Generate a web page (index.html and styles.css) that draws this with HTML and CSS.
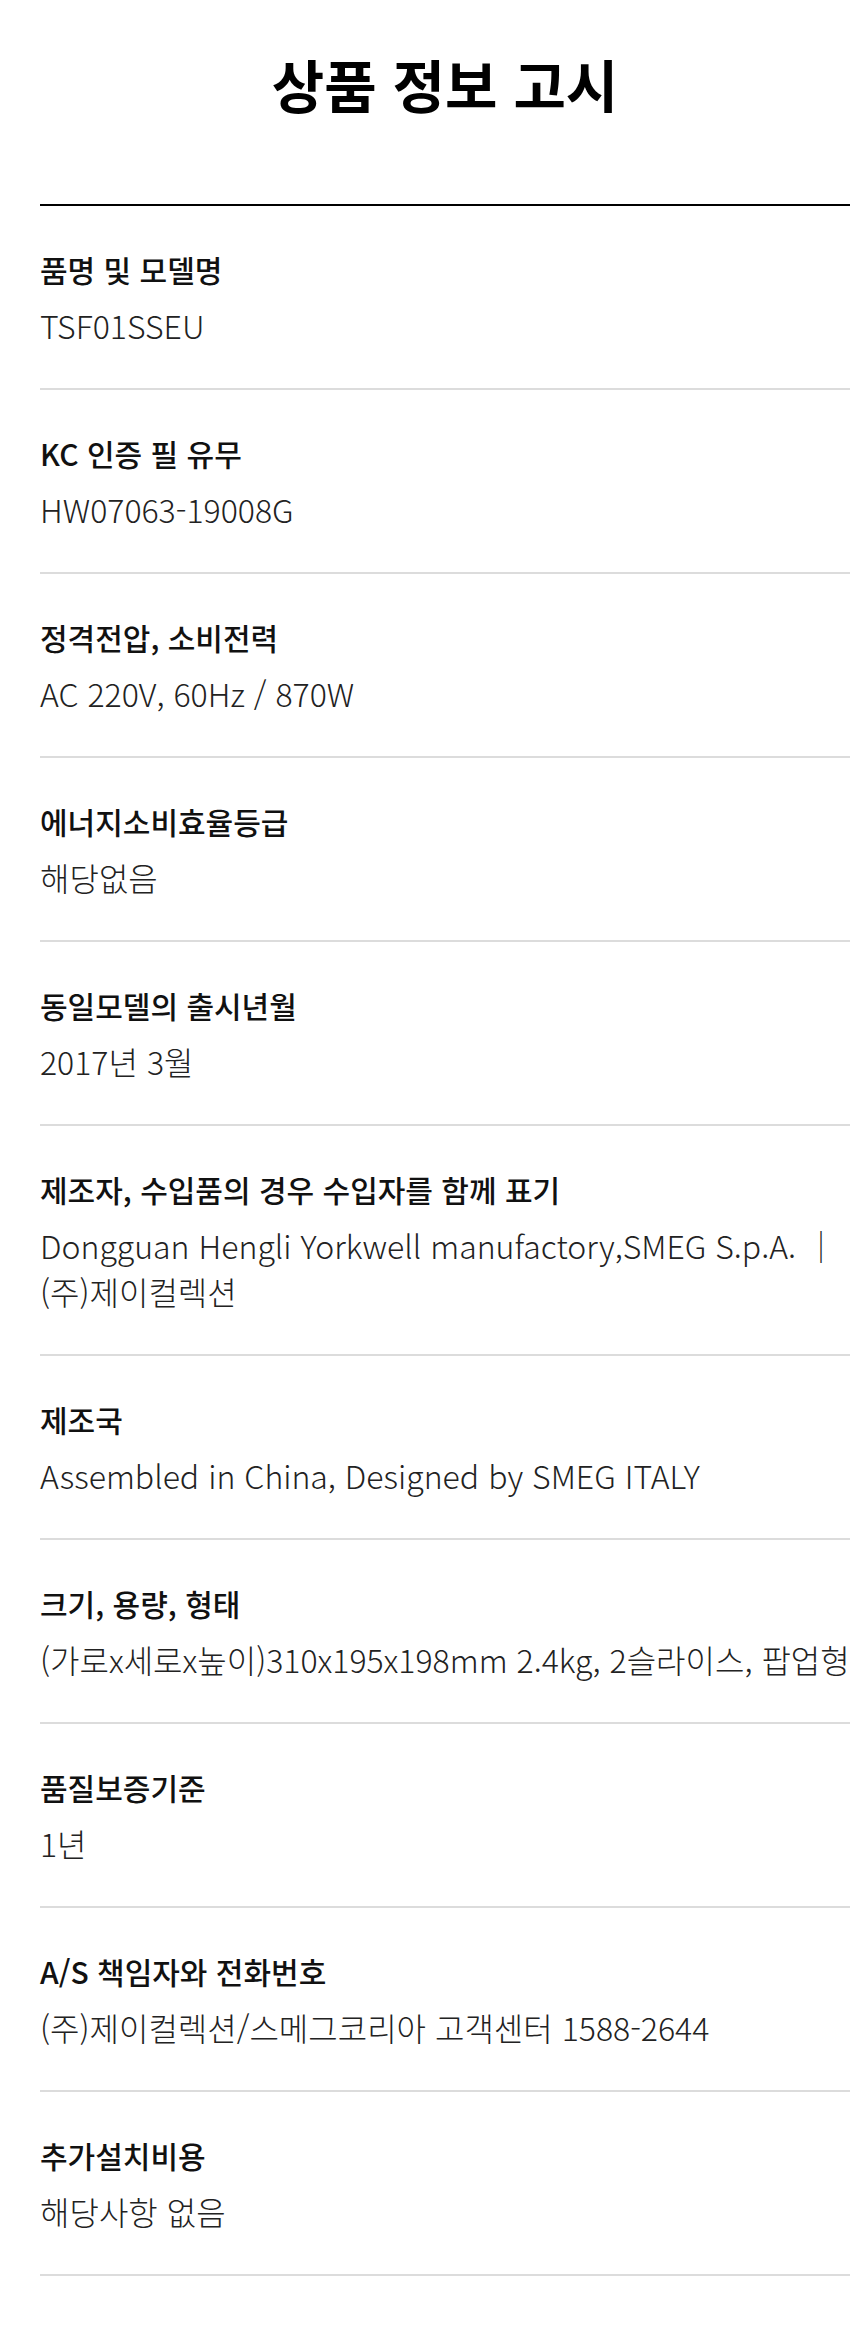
FILE: index.html
```html
<!DOCTYPE html>
<html lang="ko">
<head>
    <meta charset="UTF-8">
    <meta name="viewport" content="width=device-width, initial-scale=1.0">
    <title>상품 정보 고시</title>
    <link rel="stylesheet" href="styles.css">
</head>
<body>
    <div class="notice">
        <h1 class="notice-title">상품 정보 고시</h1>

        <ul class="info-list">
            <li class="info-item">
                <p class="info-label">품명 및 모델명</p>
                <p class="info-value">TSF01SSEU</p>
            </li>
            <li class="info-item">
                <p class="info-label">KC 인증 필 유무</p>
                <p class="info-value">HW07063-19008G</p>
            </li>
            <li class="info-item">
                <p class="info-label">정격전압, 소비전력</p>
                <p class="info-value">AC 220V, 60Hz / 870W</p>
            </li>
            <li class="info-item">
                <p class="info-label">에너지소비효율등급</p>
                <p class="info-value">해당없음</p>
            </li>
            <li class="info-item">
                <p class="info-label">동일모델의 출시년월</p>
                <p class="info-value">2017년 3월</p>
            </li>
            <li class="info-item">
                <p class="info-label">제조자, 수입품의 경우 수입자를 함께 표기</p>
                <p class="info-value">Dongguan Hengli Yorkwell manufactory,SMEG S.p.A. ｜ (주)제이컬렉션</p>
            </li>
            <li class="info-item">
                <p class="info-label">제조국</p>
                <p class="info-value">Assembled in China, Designed by SMEG ITALY</p>
            </li>
            <li class="info-item">
                <p class="info-label">크기, 용량, 형태</p>
                <p class="info-value">(가로x세로x높이)310x195x198mm 2.4kg, 2슬라이스, 팝업형</p>
            </li>
            <li class="info-item">
                <p class="info-label">품질보증기준</p>
                <p class="info-value">1년</p>
            </li>
            <li class="info-item">
                <p class="info-label">A/S 책임자와 전화번호</p>
                <p class="info-value">(주)제이컬렉션/스메그코리아 고객센터 1588-2644</p>
            </li>
            <li class="info-item">
                <p class="info-label">추가설치비용</p>
                <p class="info-value">해당사항 없음</p>
            </li>
        </ul>
    </div>
</body>
</html>
```

FILE: styles.css
```css
body {
    font-family: "Noto Sans CJK KR", "Noto Sans", sans-serif;
    color: #111;
    background-color: #fff;
    margin: 0;
    padding: 0 10px 51px 40px;
}
.notice-title {
    font-size: 57px;
    font-weight: 700;
    line-height: 78px;
    text-align: center;
    color: #000;
    margin: 44px 0 82px;
}
.info-list {
    list-style: none;
    margin: 0;
    padding: 0;
    border-top: 2px solid #000;
}
.info-item {
    padding: 40px 0;
    border-bottom: 2px solid #dcdcdc;
}
.info-label {
    font-size: 30px;
    font-weight: 500;
    line-height: 46px;
    color: #111;
    margin: 0 0 10px;
}
.info-value {
    font-size: 32px;
    font-weight: 300;
    line-height: 46px;
    color: #222;
    margin: 0;
}
```
